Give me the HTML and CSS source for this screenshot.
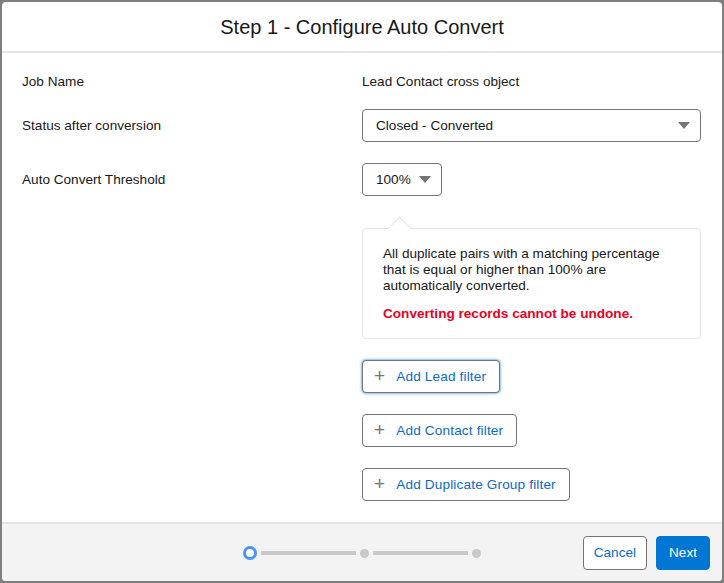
FILE: index.html
```html
<!DOCTYPE html>
<html lang="en">
<head>
    <meta charset="UTF-8">
    <meta name="viewport" content="width=device-width, initial-scale=1.0">
    <title>Configure Auto Convert</title>
    <link rel="stylesheet" href="styles.css">
</head>
<body>
    <div class="backdrop">
        <div class="modal">
            <div class="modal-header">
                <h2>Step 1 - Configure Auto Convert</h2>
            </div>

            <div class="modal-body">
                <div class="row row-text">
                    <div class="label">Job Name</div>
                    <div class="value">Lead Contact cross object</div>
                </div>

                <div class="row">
                    <div class="label">Status after conversion</div>
                    <div class="value">
                        <div class="select select-wide">
                            <span>Closed - Converted</span>
                            <span class="caret"></span>
                        </div>
                    </div>
                </div>

                <div class="row">
                    <div class="label">Auto Convert Threshold</div>
                    <div class="value">
                        <div class="select select-small">
                            <span>100%</span>
                            <span class="caret"></span>
                        </div>
                    </div>
                </div>

                <div class="row">
                    <div class="label"></div>
                    <div class="value">
                        <div class="popover">
                            <p>All duplicate pairs with a matching percentage that is equal or higher than 100% are automatically converted.</p>
                            <p class="warning">Converting records cannot be undone.</p>
                        </div>

                        <div class="filters">
                            <button class="filter-btn focused"><span class="plus">+</span>Add Lead filter</button>
                            <button class="filter-btn"><span class="plus">+</span>Add Contact filter</button>
                            <button class="filter-btn"><span class="plus">+</span>Add Duplicate Group filter</button>
                        </div>
                    </div>
                </div>
            </div>

            <div class="modal-footer">
                <div class="progress">
                    <span class="step current"></span>
                    <span class="bar"></span>
                    <span class="step"></span>
                    <span class="bar"></span>
                    <span class="step"></span>
                </div>
                <div class="actions">
                    <button class="btn btn-neutral">Cancel</button>
                    <button class="btn btn-brand">Next</button>
                </div>
            </div>
        </div>
    </div>
</body>
</html>
```

FILE: styles.css
```css
html, body {
    margin: 0;
    padding: 0;
    height: 100%;
}
body {
    font-family: "Liberation Sans", Arial, sans-serif;
    font-size: 13.6px;
    color: #181818;
    background-color: #7f7f7f;
}
.backdrop {
    padding: 2px;
    height: 100%;
    box-sizing: border-box;
}
.modal {
    background-color: white;
    border-radius: 4px;
    height: 100%;
    display: flex;
    flex-direction: column;
    overflow: hidden;
}
.modal-header {
    height: 49px;
    border-bottom: 2px solid #e5e5e5;
    display: flex;
    align-items: center;
    justify-content: center;
    flex-shrink: 0;
}
.modal-header h2 {
    margin: 0;
    font-size: 20px;
    font-weight: normal;
    padding-top: 2px;
}
.modal-body {
    flex: 1;
    padding: 21px 21px 0 20px;
}
.row {
    display: flex;
    margin-bottom: 21px;
}
.row-text {
    margin-bottom: 20px;
}
.label {
    width: 340px;
    flex-shrink: 0;
    padding-top: 9px;
}
.row-text .label,
.row-text .value {
    padding-top: 0;
}
.value {
    flex: 1;
}
.select {
    display: flex;
    align-items: center;
    justify-content: space-between;
    height: 31px;
    border: 1px solid #747474;
    border-radius: 4px;
    padding: 0 10px 0 13px;
}
.select-small {
    display: inline-flex;
    width: 55px;
}
.caret {
    width: 0;
    height: 0;
    border-left: 6px solid transparent;
    border-right: 6px solid transparent;
    border-top: 7px solid #747474;
}
.row:nth-child(3) {
    margin-bottom: 0;
}
.popover {
    position: relative;
    margin-top: 32px;
    border: 1px solid #e5e5e5;
    border-radius: 4px;
    padding: 17px 20px 16px 20px;
    line-height: 16px;
}
.popover::before {
    content: "";
    position: absolute;
    top: -9px;
    left: 28px;
    width: 16px;
    height: 16px;
    background: white;
    border-left: 1px solid #e5e5e5;
    border-top: 1px solid #e5e5e5;
    transform: rotate(45deg);
}
.popover p {
    margin: 0;
    position: relative;
}
.popover p + p {
    margin-top: 12px;
}
.warning {
    color: #ea001e;
    font-weight: bold;
}
.filters {
    display: flex;
    flex-direction: column;
    align-items: flex-start;
    gap: 21px;
    margin-top: 21px;
}
.filter-btn {
    font-family: inherit;
    font-size: 13.6px;
    letter-spacing: 0.15px;
    color: #0b6bcb;
    background: white;
    border: 1px solid #747474;
    border-radius: 4px;
    height: 33px;
    padding: 0 13px 0 11px;
    display: flex;
    align-items: center;
    cursor: pointer;
}
.filter-btn.focused {
    box-shadow: 0 0 3px #0176d3;
}
.plus {
    color: #747474;
    font-size: 19px;
    font-weight: normal;
    margin-right: 11px;
    line-height: 1;
    position: relative;
    top: -1px;
}
.modal-footer {
    height: 57px;
    flex-shrink: 0;
    background-color: #f3f3f3;
    border-top: 2px solid #e5e5e5;
    display: flex;
    align-items: center;
    justify-content: flex-end;
    position: relative;
    padding-right: 12px;
}
.progress {
    position: absolute;
    left: 241px;
    top: 22px;
    display: flex;
    align-items: center;
}
.step {
    width: 9px;
    height: 9px;
    border-radius: 50%;
    background-color: #c9c9c9;
}
.step.current {
    width: 8px;
    height: 8px;
    background-color: white;
    border: 3px solid #4b95f5;
}
.bar {
    width: 95px;
    height: 4px;
    background-color: #c9c9c9;
    margin: 0 4px;
}
.actions {
    display: flex;
    gap: 9px;
}
.btn {
    font-family: inherit;
    font-size: 13.6px;
    height: 34px;
    border-radius: 4px;
    padding: 0 12px;
    cursor: pointer;
}
.btn-neutral {
    background: white;
    color: #0b6bcb;
    border: 1px solid #747474;
    padding: 0 10px;
}
.btn-brand {
    background: #0176d3;
    color: white;
    border: 1px solid #0176d3;
}
```
